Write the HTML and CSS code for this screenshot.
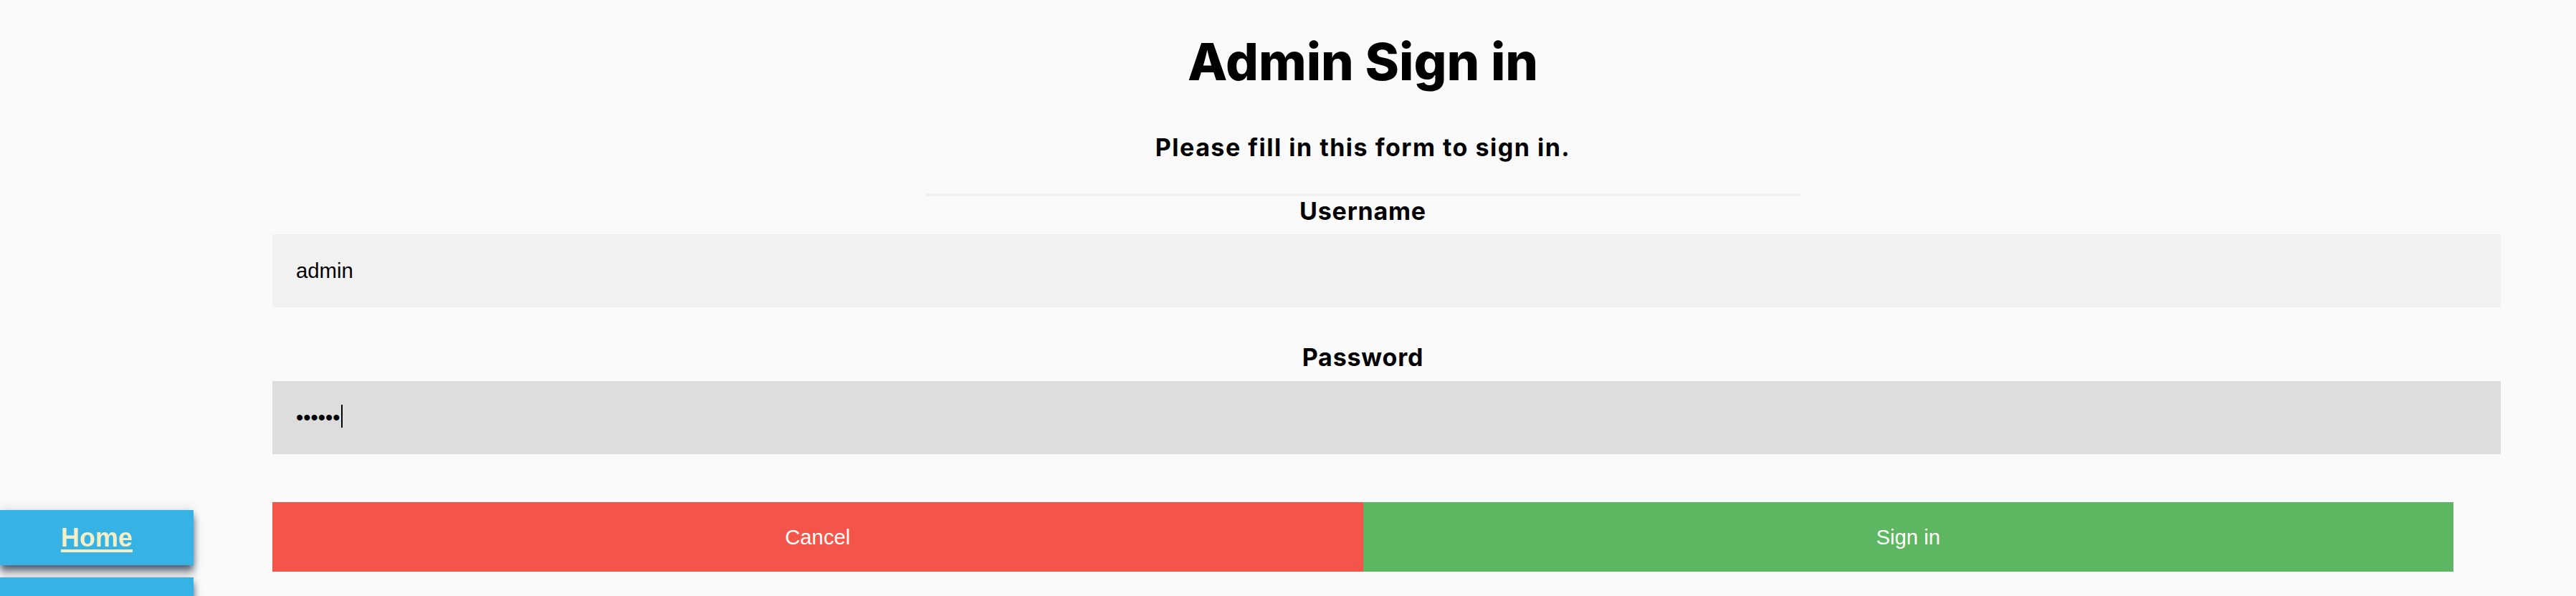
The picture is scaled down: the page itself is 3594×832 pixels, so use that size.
FILE: index.html
```html
<!DOCTYPE html>
<html lang="en">
<head>
<meta charset="utf-8">
<title>Admin Sign in</title>
<link rel="stylesheet" href="styles.css">
</head>
<body>
<nav class="sidenav">
  <a class="nav-item" href="#">Home</a>
  <a class="nav-item nav-item-empty" href="#"></a>
</nav>
<main class="page">
  <form class="signin">
    <h1 class="title">Admin Sign in</h1>
    <p class="subtitle">Please fill in this form to sign in.</p>
    <hr class="divider">
    <label class="field-label" for="uname">Username</label>
    <input class="field field-user" id="uname" type="text" value="admin">
    <label class="field-label field-label-pass" for="psw">Password</label>
    <div class="field-wrap">
      <input class="field field-pass" id="psw" type="password" value="secret">
      <span class="caret"></span>
    </div>
    <div class="actions">
      <button type="button" class="btn btn-cancel">Cancel</button>
      <button type="button" class="btn btn-signin">Sign in</button>
    </div>
  </form>
</main>
</body>
</html>
```
FILE: styles.css
```css
html, body {
  margin: 0;
  padding: 0;
  background: #fafafa;
}

body {
  font-family: "Inter", "Liberation Sans", sans-serif;
  color: #000;
  width: 3594px;
  height: 832px;
  overflow: hidden;
}

.sidenav {
  position: fixed;
  left: 0;
  top: 712px;
  width: 270px;
  display: flex;
  flex-direction: column;
  gap: 17px;
}

.nav-item {
  display: flex;
  align-items: center;
  justify-content: center;
  height: 77px;
  background: #36b3e4;
  color: #f2efc6;
  font-family: "Liberation Sans", Arial, sans-serif;
  font-weight: 700;
  font-size: 36px;
  text-decoration: underline;
  text-decoration-thickness: 4px;
  text-underline-offset: 4px;
  box-shadow: 0 8px 10px rgba(30, 40, 70, 0.75), 0 -4px 12px rgba(0, 0, 0, 0.08);
}

.page {
  margin-left: 380px;
  width: 3043px;
}

.signin {
  display: flex;
  flex-direction: column;
}

.title {
  margin: 44px 0 0;
  font-size: 72px;
  line-height: 84px;
  font-weight: 800;
  text-align: center;
}

.subtitle {
  margin: 58px 0 0;
  font-size: 34px;
  line-height: 40px;
  font-weight: 700;
  letter-spacing: 1.5px;
  text-align: center;
}

.divider {
  width: 1221px;
  height: 4px;
  margin: 44px auto 0;
  border: 0;
  background: #efefef;
}

.field-label {
  display: block;
  margin-top: 0;
  font-size: 34px;
  line-height: 42px;
  font-weight: 700;
  letter-spacing: 0.8px;
  text-align: center;
}

.field {
  display: block;
  width: 100%;
  height: 102px;
  margin: 0;
  padding: 0 33px;
  border: 0;
  outline: none;
  box-sizing: content-box;
  font-family: "Liberation Sans", Arial, sans-serif;
  font-size: 29.3px;
  color: #000;
}

.field-user {
  margin-top: 11px;
  background: #f1f1f1;
}

.field-label-pass {
  margin-top: 49px;
}

.field-wrap {
  position: relative;
  margin-top: 12px;
}

.field-pass {
  background: #dddddd;
}

.caret {
  position: absolute;
  left: 96px;
  top: 33px;
  width: 2px;
  height: 32px;
  background: #000;
}

.actions {
  display: flex;
  margin-top: 67px;
}

.btn {
  flex: 1 1 0;
  height: 97px;
  margin: 0;
  border: 0;
  padding: 0;
  font-family: "Liberation Sans", Arial, sans-serif;
  font-size: 29.3px;
  color: #fff;
  cursor: pointer;
}

.btn-cancel {
  background: #f4554a;
}

.btn-signin {
  background: #5db661;
}
```
